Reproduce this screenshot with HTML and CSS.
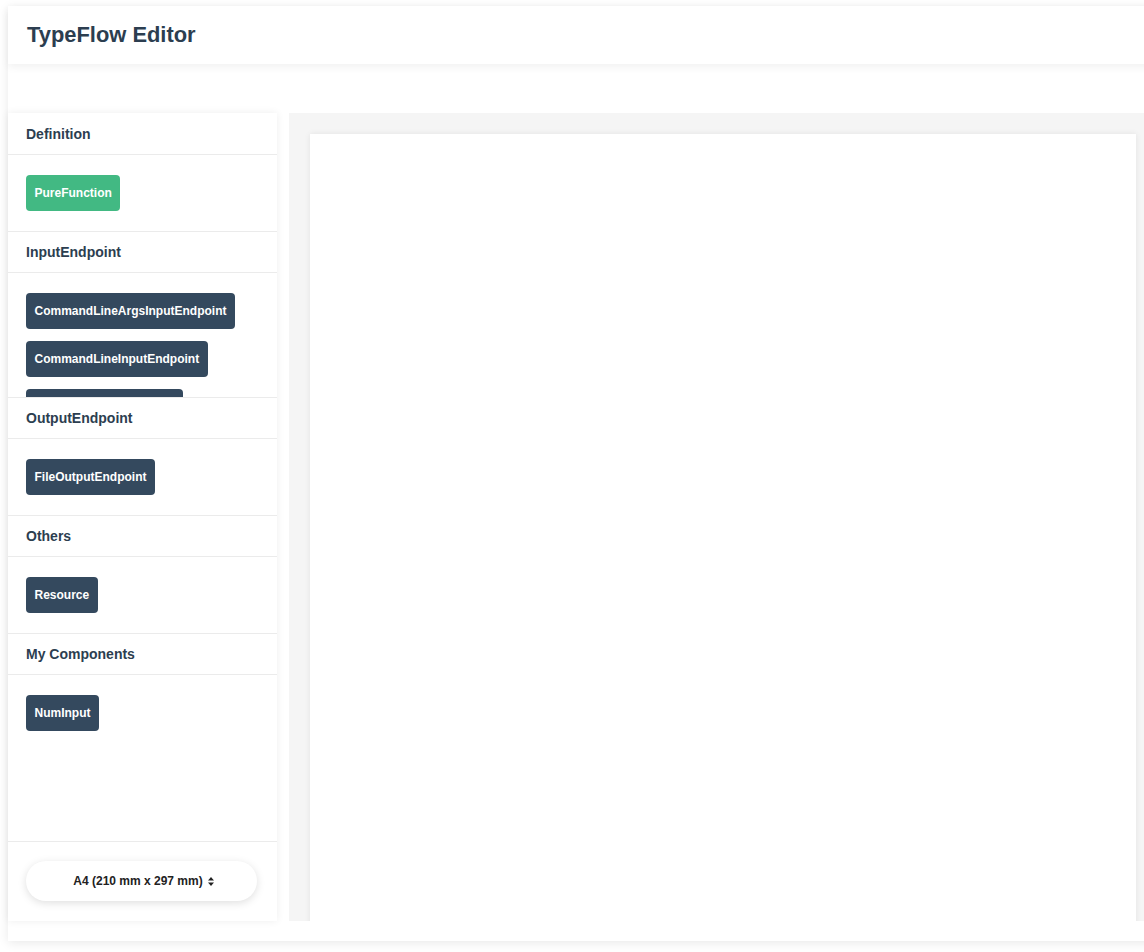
FILE: index.html
```html
<!DOCTYPE html>
<html lang="en">
<head>
<meta charset="utf-8">
<title>TypeFlow Editor</title>
<link rel="stylesheet" href="styles.css">
</head>
<body>
<div class="app">
  <header class="app-header">
    <h1 class="title">TypeFlow Editor</h1>
  </header>
  <div class="toolbar"></div>
  <main class="main">
    <aside class="sidebar">
      <div class="sections">
        <section class="section">
          <div class="section-title">Definition</div>
          <div class="section-body">
            <button class="node-btn green">PureFunction</button>
          </div>
        </section>
        <section class="section">
          <div class="section-title">InputEndpoint</div>
          <div class="section-body clipped">
            <button class="node-btn">CommandLineArgsInputEndpoint</button>
            <button class="node-btn">CommandLineInputEndpoint</button>
            <button class="node-btn">ParameterInputEndpoint</button>
            <button class="node-btn">FileInputEndpoint</button>
          </div>
        </section>
        <section class="section">
          <div class="section-title">OutputEndpoint</div>
          <div class="section-body">
            <button class="node-btn">FileOutputEndpoint</button>
          </div>
        </section>
        <section class="section">
          <div class="section-title">Others</div>
          <div class="section-body">
            <button class="node-btn">Resource</button>
          </div>
        </section>
        <section class="section">
          <div class="section-title">My Components</div>
          <div class="section-body">
            <button class="node-btn">NumInput</button>
          </div>
        </section>
      </div>
      <div class="sidebar-footer">
        <div class="paper-select">
          <span>A4 (210 mm x 297 mm)</span>
          <svg class="arrows" width="6" height="9" viewBox="0 0 6 9"><path d="M3 0 L6 3.5 L0 3.5 Z M0 5.5 L6 5.5 L3 9 Z" fill="#222"/></svg>
        </div>
      </div>
    </aside>
    <div class="canvas">
      <div class="page"></div>
    </div>
  </main>
</div>
</body>
</html>
```
FILE: styles.css
```css
html, body {
  margin: 0;
  padding: 0;
}
body {
  width: 1144px;
  height: 952px;
  overflow: hidden;
  background: #ffffff;
  font-family: "Liberation Sans", Arial, sans-serif;
  color: #2c3e50;
}
.app {
  margin: 6px 0 0 8px;
  width: 1160px;
  height: 935px;
  box-sizing: border-box;
  padding-bottom: 20px;
  background: #fff;
  box-shadow: 0 2px 10px rgba(0, 0, 0, 0.09);
  display: flex;
  flex-direction: column;
}
.app-header {
  height: 58px;
  flex: none;
  display: flex;
  align-items: center;
  padding: 0 19px;
  box-shadow: 0 3px 8px rgba(0, 0, 0, 0.06);
  position: relative;
  z-index: 1;
}
.title {
  margin: 0;
  font-size: 21.9px;
  font-weight: 700;
  color: #2c3e50;
}
.toolbar {
  height: 49px;
  flex: none;
}
.main {
  flex: 1;
  display: flex;
  gap: 12px;
  min-height: 0;
}
.sidebar {
  width: 269px;
  flex: none;
  background: #fff;
  box-shadow: 0 0 8px rgba(0, 0, 0, 0.07);
  display: flex;
  flex-direction: column;
  position: relative;
  z-index: 1;
}
.sections {
  flex: 1;
  overflow: hidden;
  padding-top: 1px;
}
.section-title {
  height: 40px;
  line-height: 41px;
  padding: 0 18px;
  font-size: 14px;
  font-weight: 700;
  color: #2c3e50;
  border-bottom: 1px solid #ebebeb;
}
.section-body {
  padding: 20px 18px;
  border-bottom: 1px solid #ebebeb;
  display: flex;
  flex-direction: column;
  align-items: flex-start;
  gap: 12px;
}
.section:last-child .section-body {
  border-bottom: none;
}
.section-body.clipped {
  height: 104px;
  padding-bottom: 0;
  overflow: hidden;
  box-sizing: content-box;
}
.node-btn {
  flex: none;
  height: 36px;
  padding: 0 8.5px;
  border: none;
  border-radius: 4px;
  background: #34495e;
  color: #fff;
  font-family: "Liberation Sans", Arial, sans-serif;
  font-size: 12px;
  font-weight: 700;
  cursor: pointer;
}
.node-btn.green {
  background: #42b983;
}
.sidebar-footer {
  height: 80px;
  flex: none;
  box-sizing: border-box;
  border-top: 1px solid #ebebeb;
  padding: 19px 18px 0;
}
.paper-select {
  width: 231px;
  height: 40px;
  box-sizing: border-box;
  padding-left: 4px;
  border-radius: 20px;
  background: #fff;
  box-shadow: 0 2px 8px rgba(0, 0, 0, 0.13);
  display: flex;
  align-items: center;
  justify-content: center;
  gap: 5px;
  font-size: 12px;
  font-weight: 700;
  color: #222;
}
.arrows {
  display: block;
  margin-top: 1px;
}
.canvas {
  flex: 1;
  background: #f5f5f5;
  padding: 21px 21px 0;
  overflow: hidden;
}
.page {
  width: 826px;
  height: 1169px;
  background: #fff;
  box-shadow: 0 0 6px rgba(0, 0, 0, 0.08);
}
```
